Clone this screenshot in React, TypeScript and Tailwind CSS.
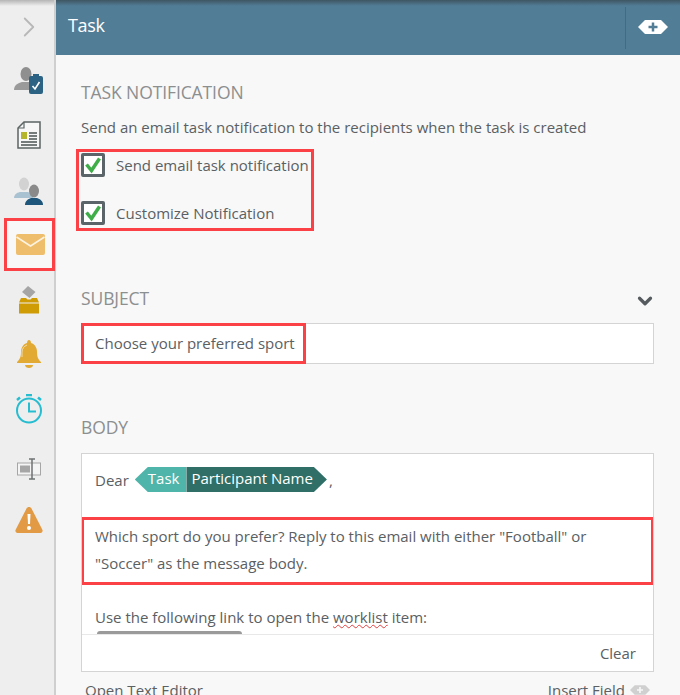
import { ChevronDown, ChevronRight } from "lucide-react";

const PersonCheckIcon = () => (
  <svg width="30" height="32" viewBox="0 0 30 32">
    <ellipse cx="12" cy="10" rx="5.500" ry="7" fill="#8f8f8f" />
    <path d="M0 26c0-5 4-7 8-8h8c2 1 3 2 4 3v5z" fill="#9a9a9a" />
    <rect x="15" y="12" width="14" height="18" rx="2" fill="#2c6283" />
    <rect x="19" y="10" width="6" height="4" fill="#2c6283" />
    <path d="M18.500 22l2.500 3 4.500-7" fill="none" stroke="#fff" strokeWidth="1.600" />
  </svg>
);

const DocIcon = () => (
  <svg width="24" height="28" viewBox="0 0 24 28">
    <path d="M7 1h16v26H1V7z" fill="#f7f7f7" stroke="#5c6464" strokeWidth="1.500" />
    <path d="M7 1v6H1" fill="none" stroke="#5c6464" strokeWidth="1.200" />
    <rect x="4" y="11" width="6" height="7" fill="#b5b52c" />
    <path d="M12 12h8M12 15h8M12 18h8M4 21h16M4 24h16" stroke="#4c5454" strokeWidth="1.500" />
  </svg>
);

const PeopleIcon = () => (
  <svg width="30" height="30" viewBox="0 0 30 30">
    <ellipse cx="10" cy="8" rx="5" ry="6.500" fill="#d2d2d2" />
    <path d="M0 22c0-4 4-6 7-6h7c3 1 5 3 5 6z" fill="#a9c2d2" />
    <ellipse cx="20" cy="15" rx="5" ry="6.500" fill="#8a8a8a" />
    <path d="M11 29c0-4 3-6 6-7h6c3 1 6 3 6 7z" fill="#1e567b" />
  </svg>
);

const MailIcon = () => (
  <svg width="29" height="21" viewBox="0 0 29 21">
    <rect width="29" height="21" rx="2" fill="#efbe6c" />
    <path d="M0.500 3l14 9 14-9" fill="none" stroke="#fbf3e2" strokeWidth="1.500" />
  </svg>
);

const BallotIcon = () => (
  <svg width="20" height="28" viewBox="0 0 20 28">
    <path d="M3 6l6-6 7.500 6-6 6z" fill="#a5a5a5" />
    <path d="M2 12h5l1.500 1.500h3L13 12h5l2 4.500H0z" fill="#cf9c05" />
    <rect y="17.500" width="20" height="10" fill="#cf9c05" />
  </svg>
);

const BellIcon = () => (
  <svg width="24" height="29" viewBox="0 0 24 29">
    <path d="M12 0c1 0 2 1 2 3 4 1 6 5 6 9 0 5 1 7 4 10v1H0v-1c3-3 4-5 4-10 0-4 2-8 6-9 0-2 1-3 2-3z" fill="#e2aa33" />
    <path d="M8 25h8c0 2-2 3-4 3s-4-1-4-3z" fill="#e2aa33" />
    <path d="M5 17v-5c0-3 2-6 5-7" fill="none" stroke="#f3dca8" strokeWidth="1" />
  </svg>
);

const TimerIcon = () => (
  <svg width="28" height="30" viewBox="0 0 28 30">
    <circle cx="14" cy="16.500" r="12" fill="none" stroke="#27bdd0" strokeWidth="2" />
    <path d="M14 8.500v9h7" fill="none" stroke="#27bdd0" strokeWidth="2" />
    <path d="M11 1h6M2 6l3-2.500M26 6l-3-2.500" stroke="#27bdd0" strokeWidth="2.500" />
  </svg>
);

const FieldIcon = () => (
  <svg width="24" height="22" viewBox="0 0 24 22">
    <rect x="0.500" y="5" width="23" height="12" fill="#f4f4f4" stroke="#a6a6a6" />
    <rect x="3" y="7.500" width="10" height="7" fill="#a6a6a6" />
    <path d="M15 1v20M12 1h6M12 21h6" stroke="#6d7373" strokeWidth="1.500" />
  </svg>
);

const WarnIcon = () => (
  <svg width="28" height="28" viewBox="0 0 28 28">
    <path d="M14 1c1 0 2 .5 2.500 1.500L27.500 24c.5 1.500-.5 3-2 3h-23c-1.500 0-2.500-1.500-2-3L11.500 2.500C12 1.500 13 1 14 1z" fill="#e29a45" />
    <path d="M12.500 8h3l-.5 10h-2z" fill="#fff" />
    <circle cx="14" cy="22" r="2" fill="#fff" />
  </svg>
);

const Hexagon = ({ light }: { light?: boolean }) => (
  <svg width={light ? 20 : 30} height={light ? 10 : 14} viewBox="0 0 30 14">
    <path d="M7 0h16l7 7-7 7H7L0 7z" fill={light ? "#d0d0d0" : "#fff"} />
    <path d="M15 2.500v9M10.500 7h9" stroke={light ? "#f7f7f7" : "#527d97"} strokeWidth="2.500" />
  </svg>
);

const CheckRow = ({ label, className }: { label: string; className: string }) => (
  <div className={`flex items-center ${className}`}>
    <span className="w-[24px] h-[24px] rounded-[2px] border-[3px] border-[#5b6468] bg-white flex items-center justify-center">
      <svg width="18" height="18" viewBox="0 0 18 18">
        <path d="M2.500 8.500l5 6L15.500 2.500" fill="none" stroke="#3fae49" strokeWidth="3.500" />
      </svg>
    </span>
    <span className="ml-[11px] text-[15px] text-[#5a6063]">{label}</span>
  </div>
);

const SideItem = ({ children, className }: { children: React.ReactNode; className: string }) => (
  <div className={`flex items-center justify-center pl-[3px] ${className}`}>{children}</div>
);

export default function App() {
  return (
    <div className="w-[680px] h-[695px] overflow-hidden flex bg-[#f8f8f8] font-['Open_Sans',sans-serif]">
      <aside className="w-[56px] shrink-0 h-full bg-[#eeeeee] border-r-2 border-[#cfcfcf] flex flex-col relative">
        <div className="absolute inset-x-0 top-0 h-[6px] bg-gradient-to-b from-[#b5b5b5] to-transparent" />
        <SideItem className="h-[53px] pt-[1px]">
          <ChevronRight className="w-[34px] h-[34px] text-[#b8b8b8]" strokeWidth={1.300} />
        </SideItem>
        <SideItem className="h-[54px]"><PersonCheckIcon /></SideItem>
        <SideItem className="h-[56px]"><DocIcon /></SideItem>
        <SideItem className="h-[55px]"><PeopleIcon /></SideItem>
        <div className="ml-[4px] w-[51px] h-[53px] border-[3px] border-[#fb4146] bg-[#f8f8f8] flex items-center justify-center pl-[2px]">
          <MailIcon />
        </div>
        <SideItem className="h-[58px]"><BallotIcon /></SideItem>
        <SideItem className="h-[50px]"><BellIcon /></SideItem>
        <SideItem className="h-[60px]"><TimerIcon /></SideItem>
        <SideItem className="h-[60px]"><FieldIcon /></SideItem>
        <SideItem className="h-[42px]"><WarnIcon /></SideItem>
      </aside>

      <main className="flex-1 min-w-0">
        <header className="h-[55px] bg-[#527d97] flex items-center pl-[12px] pb-[4px] relative">
          <div className="absolute inset-x-0 top-0 h-[6px] bg-gradient-to-b from-[#3f5663] to-transparent" />
          <span className="text-[18px] text-white tracking-[-0.300px]">Task</span>
          <div className="ml-auto mr-[54px] mt-[4px] w-px h-[42px] bg-[#3f6c88]" />
          <div className="absolute right-[12px] top-[20px] flex"><Hexagon /></div>
        </header>

        <div className="pl-[25px] pr-[26px]">
          <h2 className="mt-[25px] text-[17.500px] leading-[24px] text-[#8c8f90] tracking-[-0.100px]">TASK NOTIFICATION</h2>
          <p className="mt-[13px] text-[15px] leading-[20px] text-[#5a6063]">
            Send an email task notification to the recipients when the task is created
          </p>
          <div className="mt-[12px] -ml-[5px] w-[238px] h-[82px] border-[3px] border-[#fb4146] pl-[2px]">
            <CheckRow label="Send email task notification" className="mt-[1px]" />
            <CheckRow label="Customize Notification" className="mt-[24px]" />
          </div>

          <div className="mt-[55px] h-[24px] flex items-center justify-between">
            <h2 className="text-[17.500px] leading-[24px] text-[#8c8f90] tracking-[-0.100px]">SUBJECT</h2>
            <ChevronDown className="w-[22px] h-[22px] text-[#555b5e] -mr-[2px] mt-[5px]" strokeWidth={3.500} />
          </div>
          <div className="mt-[13px] h-[41px] bg-white border border-[#d4d4d4] relative flex items-center pl-[13px]">
            <span className="text-[15px] text-[#5a6063]">Choose your preferred sport</span>
            <div className="absolute -left-px -top-px w-[225px] h-[41px] border-[3px] border-[#fb4146]" />
          </div>

          <h2 className="mt-[51px] text-[17.500px] leading-[24px] text-[#8c8f90] tracking-[-0.100px]">BODY</h2>
          <div className="mt-[14px] h-[219px] bg-white border border-[#d4d4d4] flex flex-col">
            <div className="h-[180px] overflow-hidden relative">
              <div className="h-[63px] pl-[13px] pt-[13px] flex items-start text-[15px] leading-[26px] text-[#5a6063]">
                <span>Dear</span>
                <span className="ml-[6px] flex h-[25px] items-stretch text-[15px] text-white leading-[23px]">
                  <span className="bg-[#4fb5aa] pl-[13px] pr-[7px] [clip-path:polygon(13px_0,100%_0,100%_100%,13px_100%,0_50%)]">Task</span>
                  <span className="bg-[#2f6f68] pl-[5px] pr-[14px] [clip-path:polygon(0_0,calc(100%-13px)_0,100%_50%,calc(100%-13px)_100%,0_100%)]">Participant Name</span>
                </span>
                <span className="ml-[2px]">,</span>
              </div>
              <div className="-ml-px mr-[-1px] h-[68px] border-[3px] border-[#fb4146] pl-[11px] pt-[3px] text-[15px] leading-[27px] text-[#5a6063]">
                Which sport do you prefer? Reply to this email with either "Football" or<br />
                "Soccer" as the message body.
              </div>
              <div className="mt-[22px] pl-[13px] text-[15px] leading-[20px] text-[#5a6063]">
                Use the following link to open the <span className="underline decoration-wavy decoration-[#e04040] decoration-1">worklist</span> item:
              </div>
              <div className="absolute left-[15px] bottom-0 w-[145px] h-[3px] rounded-t-[4px] bg-[#9a9a9a]" />
            </div>
            <div className="flex-1 border-t border-[#e8e8e8] flex items-center justify-end pr-[17px] text-[15px] text-[#5a6063]">
              Clear
            </div>
          </div>
          <div className="mt-[8px] pl-[4px] flex items-center justify-between text-[15px] leading-[20px] text-[#5a6063]">
            <span>Open Text Editor</span>
            <span className="flex items-center gap-[5px] mr-[4px]">Insert Field <Hexagon light /></span>
          </div>
        </div>
      </main>
    </div>
  );
}
